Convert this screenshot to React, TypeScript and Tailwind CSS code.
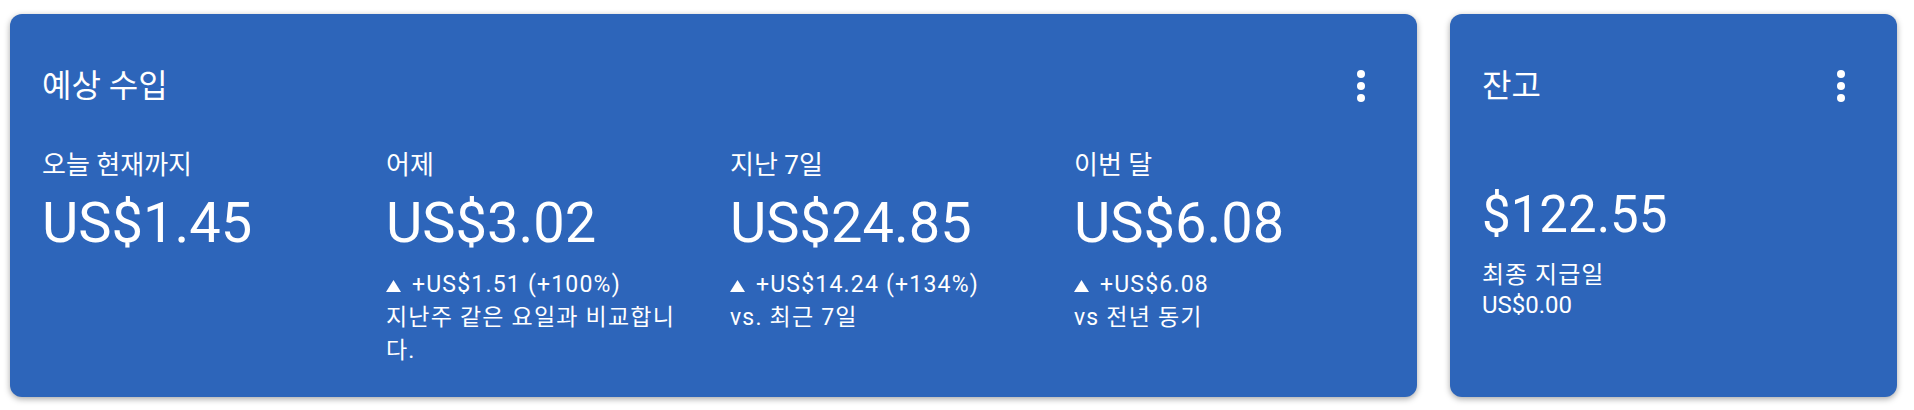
import React from "react";

const font = { fontFamily: "Roboto, 'Noto Sans CJK KR', sans-serif" };

function Kebab() {
  return (
    <div className="flex h-12 w-12 items-center justify-center">
      <svg width="8" height="32" viewBox="0 0 8 32" fill="white">
        <circle cx="4" cy="4" r="4" />
        <circle cx="4" cy="16" r="4" />
        <circle cx="4" cy="28" r="4" />
      </svg>
    </div>
  );
}

function Up() {
  return (
    <svg width="15" height="12" viewBox="0 0 15 12" className="mr-[11px] inline-block align-baseline" fill="white">
      <polygon points="7.5,0 15,12 0,12" />
    </svg>
  );
}

type Col = { label: string; value: string; change?: string; desc?: string };

const cols: Col[] = [
  { label: "오늘 현재까지", value: "US$1.45" },
  { label: "어제", value: "US$3.02", change: "+US$1.51 (+100%)", desc: "지난주 같은 요일과 비교합니다." },
  { label: "지난 7일", value: "US$24.85", change: "+US$14.24 (+134%)", desc: "vs. 최근 7일" },
  { label: "이번 달", value: "US$6.08", change: "+US$6.08", desc: "vs 전년 동기" },
];

export default function App() {
  return (
    <div className="min-h-[410px] w-[1914px] bg-white pl-[10px] pt-[14px] text-white" style={font}>
      <div className="flex gap-[33px]">
        <div className="h-[383px] w-[1407px] rounded-[12px] bg-[#2d65ba] px-8 pt-[48px] shadow-[0_2px_6px_rgba(0,0,0,0.35)]">
          <div className="flex h-12 items-center justify-between">
            <h2 className="text-[32px] leading-[40px]">예상 수입</h2>
            <Kebab />
          </div>
          <div className="mt-[39px] grid grid-cols-[repeat(4,304px)] gap-x-10">
            {cols.map((c) => (
              <div key={c.label}>
                <div className="text-[26px] leading-[32px]">{c.label}</div>
                <div className="mt-[10px] text-[56px] leading-[64px]">{c.value}</div>
                {c.change && (
                  <div className="mt-[13px] text-[23px] leading-[33px] tracking-[1.2px]">
                    <div>
                      <Up />
                      {c.change}
                    </div>
                    <div>{c.desc}</div>
                  </div>
                )}
              </div>
            ))}
          </div>
        </div>
        <div className="h-[383px] w-[447px] rounded-[12px] bg-[#2d65ba] px-8 pt-[48px] shadow-[0_2px_6px_rgba(0,0,0,0.35)]">
          <div className="flex h-12 items-center justify-between">
            <h2 className="text-[32px] leading-[40px]">잔고</h2>
            <Kebab />
          </div>
          <div className="mt-[75px] text-[51px] leading-[60px]">$122.55</div>
          <div className="mt-[15px] text-[24px] leading-[30px]">
            <div className="tracking-[1px]">최종 지급일</div>
            <div>US$0.00</div>
          </div>
        </div>
      </div>
    </div>
  );
}
